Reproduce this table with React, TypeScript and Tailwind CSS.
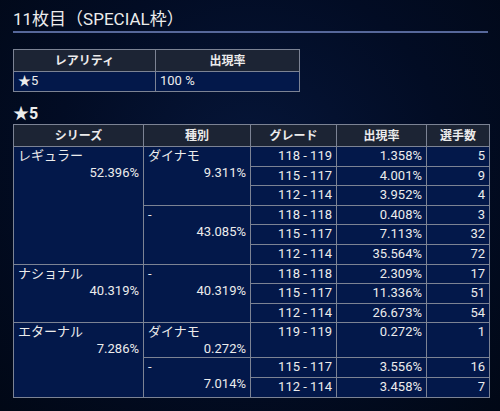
import React from "react";

type Row = {
  series?: { name: string; rate: string; span: number };
  kind?: { name: string; rate: string; span: number };
  grade: string;
  rate: string;
  count: number;
  tall?: boolean;
};

const rows: Row[] = [
  { series: { name: "レギュラー", rate: "52.396%", span: 6 }, kind: { name: "ダイナモ", rate: "9.311%", span: 3 }, grade: "118 - 119", rate: "1.358%", count: 5 },
  { grade: "115 - 117", rate: "4.001%", count: 9 },
  { grade: "112 - 114", rate: "3.952%", count: 4 },
  { kind: { name: "-", rate: "43.085%", span: 3 }, grade: "118 - 118", rate: "0.408%", count: 3 },
  { grade: "115 - 117", rate: "7.113%", count: 32 },
  { grade: "112 - 114", rate: "35.564%", count: 72 },
  { series: { name: "ナショナル", rate: "40.319%", span: 3 }, kind: { name: "-", rate: "40.319%", span: 3 }, grade: "118 - 118", rate: "2.309%", count: 17 },
  { grade: "115 - 117", rate: "11.336%", count: 51 },
  { grade: "112 - 114", rate: "26.673%", count: 54 },
  { series: { name: "エターナル", rate: "7.286%", span: 3 }, kind: { name: "ダイナモ", rate: "0.272%", span: 1 }, grade: "119 - 119", rate: "0.272%", count: 1, tall: true },
  { kind: { name: "-", rate: "7.014%", span: 2 }, grade: "115 - 117", rate: "3.556%", count: 16 },
  { grade: "112 - 114", rate: "3.458%", count: 7 },
];

const th = "border border-[#7c8394] bg-[#1c2434] font-bold text-[12px] text-center h-[22px] p-0";
const td = "border border-[#7c8394] bg-[#03184a] px-1 py-0 leading-[17px] align-top text-[13px]";

export default function App() {
  return (
    <div
      className="w-[500px] h-[411px] overflow-hidden bg-[radial-gradient(ellipse_at_50%_40%,#06163a_0%,#020c24_55%,#010816_100%)] text-[#ececec] pl-[13px] pr-[12px] pt-[8px]"
      style={{ fontFamily: 'Roboto, "Noto Sans CJK JP", sans-serif' }}
    >
      <div className="text-[17px] leading-[22px] pb-[1px]">11枚目（SPECIAL枠）</div>
      <div className="h-[2px] bg-[#56679a]" />

      <table className="mt-[16px] border-collapse w-[286px] table-fixed">
        <colgroup>
          <col className="w-[142px]" />
          <col className="w-[144px]" />
        </colgroup>
        <thead>
          <tr>
            <th className={th}>レアリティ</th>
            <th className={th}>出現率</th>
          </tr>
        </thead>
        <tbody>
          <tr className="h-[20px]">
            <td className={td + " align-middle"}>★5</td>
            <td className={td + " align-middle"}>100 %</td>
          </tr>
        </tbody>
      </table>

      <div className="mt-[12px] text-[16px] font-bold leading-[20px]">★5</div>

      <table className="border-collapse w-[476px] table-fixed">
        <colgroup>
          <col className="w-[130px]" />
          <col className="w-[107px]" />
          <col className="w-[86px]" />
          <col className="w-[90px]" />
          <col className="w-[63px]" />
        </colgroup>
        <thead>
          <tr>
            <th className={th}>シリーズ</th>
            <th className={th}>種別</th>
            <th className={th}>グレード</th>
            <th className={th}>出現率</th>
            <th className={th}>選手数</th>
          </tr>
        </thead>
        <tbody>
          {rows.map((r, i) => (
            <tr key={i} className={r.tall ? "h-[35px]" : "h-[19.6px]"}>
              {r.series && (
                <td rowSpan={r.series.span} className={td}>
                  <div>{r.series.name}</div>
                  <div className="text-right">{r.series.rate}</div>
                </td>
              )}
              {r.kind && (
                <td rowSpan={r.kind.span} className={td}>
                  <div>{r.kind.name}</div>
                  <div className="text-right">{r.kind.rate}</div>
                </td>
              )}
              <td className={td + " text-right"}>{r.grade}</td>
              <td className={td + " text-right"}>{r.rate}</td>
              <td className={td + " text-right"}>{r.count}</td>
            </tr>
          ))}
        </tbody>
      </table>
    </div>
  );
}
